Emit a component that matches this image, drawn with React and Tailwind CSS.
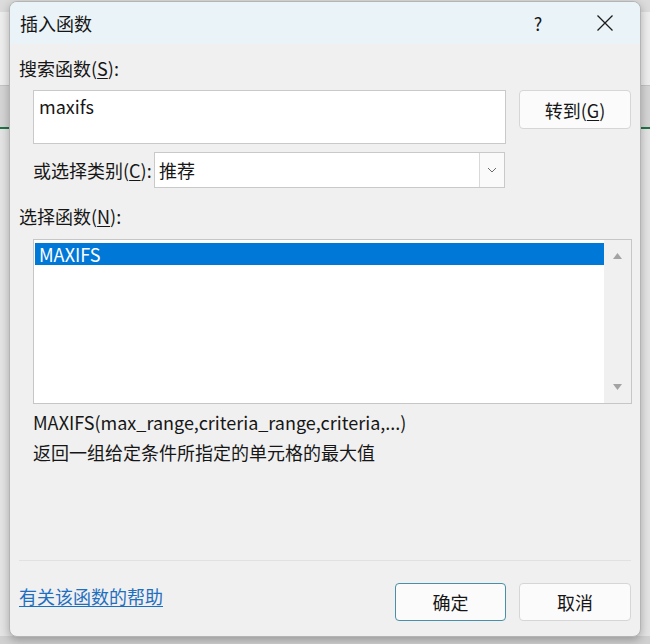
import React from "react";

const U = ({ children }) => <span className="underline underline-offset-2">{children}</span>;

export default function App() {
  return (
    <div
      className="relative w-[650px] h-[644px] overflow-hidden text-[#161616]"
      style={{ fontFamily: '"Noto Sans CJK SC", "Noto Sans", sans-serif' }}
    >
      {/* background: excel window behind the dialog */}
      <div className="flex flex-col h-full">
        <div className="h-[12px] bg-[#dcdcdc]" />
        <div className="h-[74px] bg-[#eeeeee] border-b border-[#c4c4c4]" />
        <div className="h-[43px] bg-[#d5d5d5] border-b-2 border-[#217346]" />
        <div className="flex-1 bg-[#e4e4e4]" />
        <div className="h-[8px] bg-[#d0d0d0]" />
      </div>

      {/* dialog */}
      <div className="absolute left-[9px] top-[1px] w-[632px] h-[636px] rounded-[8px] border border-[#b4b4b4] bg-[#f0f0f0] shadow-[0_3px_10px_rgba(0,0,0,0.28)] overflow-hidden flex flex-col">
        {/* title bar */}
        <div className="h-[42px] shrink-0 bg-[#eaf3f8] flex items-center pl-[10px]">
          <span className="text-[18px] leading-none">插入函数</span>
          <span className="ml-auto w-[20px] text-center text-[18px] leading-none mr-[48px]">?</span>
          <svg width="18" height="18" viewBox="0 0 18 18" className="mr-[26px]">
            <path d="M1.5 1.5 L16.5 16.5 M16.5 1.5 L1.5 16.5" stroke="#1b1b1b" strokeWidth="1.3" fill="none" />
          </svg>
        </div>

        {/* body */}
        <div className="flex flex-col pl-[9px] pr-[9px] text-[18px]">
          <div className="mt-[12px] h-[24px] leading-[24px]">
            搜索函数(<U>S</U>):
          </div>

          <div className="mt-[10px] flex items-start pl-[14px]">
            <div className="w-[473px] h-[54px] bg-white border border-[#c9c9c9] px-[5px] pt-[2px] leading-[26px]">
              maxifs
            </div>
            <button className="ml-[13px] w-[112px] h-[39px] bg-[#fbfbfb] border border-[#d6d6d6] rounded-[4px] flex items-center justify-center leading-none">
              转到(<U>G</U>)
            </button>
          </div>

          <div className="mt-[8px] flex items-center pl-[14px]">
            <div className="w-[121px] whitespace-nowrap">
              或选择类别(<U>C</U>):
            </div>
            <div className="w-[351px] h-[36px] bg-white border border-[#c9c9c9] flex items-stretch">
              <div className="flex-1 flex items-center pl-[4px]">推荐</div>
              <div className="w-[25px] border-l border-[#d9d9d9] bg-[#fafafa] flex items-center justify-center">
                <svg width="10" height="6" viewBox="0 0 10 6">
                  <path d="M1 1 L5 5 L9 1" stroke="#6b6b6b" strokeWidth="1" fill="none" />
                </svg>
              </div>
            </div>
          </div>

          <div className="mt-[16px] h-[24px] leading-[24px]">
            选择函数(<U>N</U>):
          </div>

          <div className="mt-[11px] ml-[14px] w-[599px] h-[165px] bg-white border border-[#c6c6c6] flex">
            <div className="flex-1 pl-[1px] pt-[3px]">
              <div className="h-[22px] bg-[#0078d7] text-white leading-[22px] pl-[4px]">MAXIFS</div>
            </div>
            <div className="w-[27px] bg-[#f0f0f0] flex flex-col items-center justify-between py-[13px]">
              <svg width="9" height="6" viewBox="0 0 9 6">
                <path d="M0 6 L4.5 0 L9 6 Z" fill="#a3a3a3" />
              </svg>
              <svg width="9" height="6" viewBox="0 0 9 6">
                <path d="M0 0 L4.5 6 L9 0 Z" fill="#a3a3a3" />
              </svg>
            </div>
          </div>

          <div className="mt-[6px] ml-[14px] h-[24px] leading-[24px]">
            MAXIFS(max_range,criteria_range,criteria,...)
          </div>
          <div className="mt-[6px] ml-[14px] h-[24px] leading-[24px]">
            返回一组给定条件所指定的单元格的最大值
          </div>

          <div className="mt-[96px] h-px bg-[#e1e1e1]" />

          <div className="mt-[22px] flex items-start">
            <a className="mt-[1px] h-[24px] leading-[24px] text-[#1f6fc0] underline underline-offset-2">
              有关该函数的帮助
            </a>
            <button className="ml-auto w-[111px] h-[38px] bg-[#fbfbfb] border border-[#4a8fa8] rounded-[4px] flex items-center justify-center leading-none">
              确定
            </button>
            <button className="ml-[13px] w-[112px] h-[38px] bg-[#fbfbfb] border border-[#d6d6d6] rounded-[4px] flex items-center justify-center leading-none">
              取消
            </button>
          </div>
        </div>
      </div>
    </div>
  );
}
